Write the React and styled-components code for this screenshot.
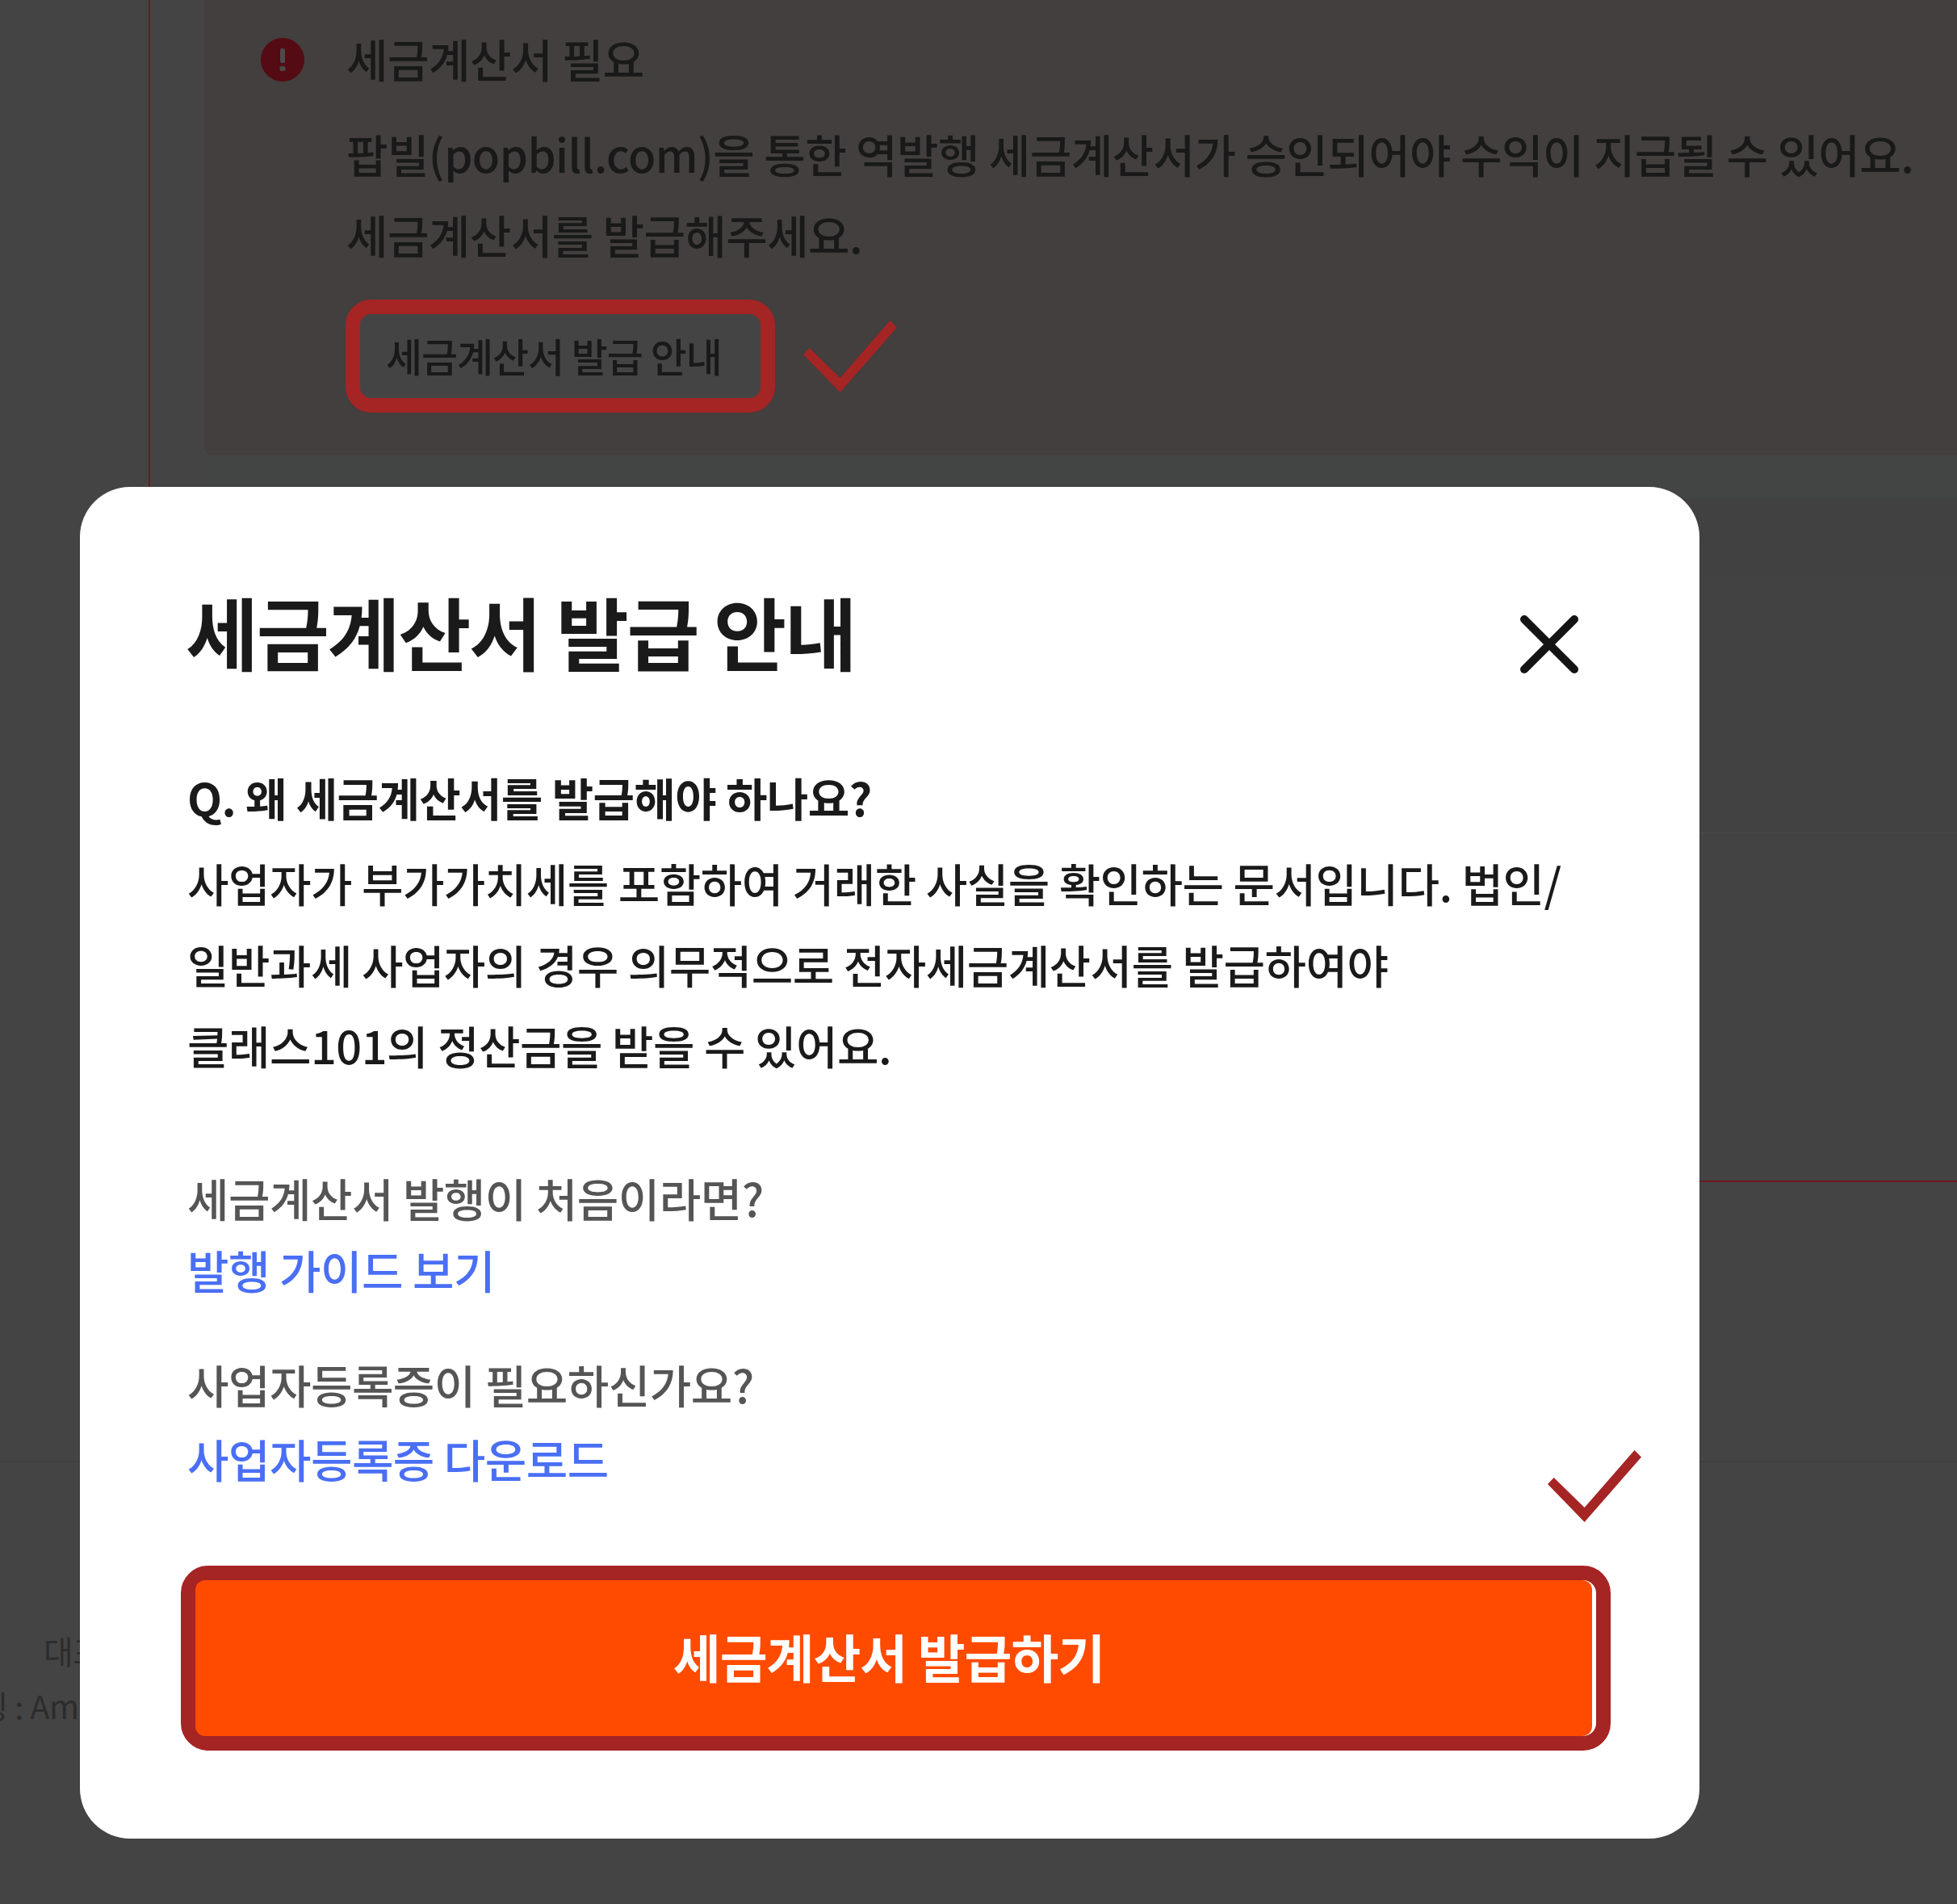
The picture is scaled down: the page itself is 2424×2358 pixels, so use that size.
import React from "react";
import styled, { createGlobalStyle } from "styled-components";

const GlobalStyle = createGlobalStyle`
  html, body { margin: 0; padding: 0; background: #444; }
  body { font-family: "Noto Sans CJK KR", "Noto Sans", sans-serif; }
  * { box-sizing: border-box; }
`;

const Page = styled.div`
  position: relative;
  width: 2424px;
  height: 2358px;
  overflow: hidden;
  background: #444;
  letter-spacing: -0.55px;
`;

/* dimmed page behind the modal */
const MarkedArea = styled.div`
  margin-left: 184px;
  height: 1464px;
  padding-left: 65px;
  border-left: 2px solid #6b1a1e;
  border-bottom: 2px solid #6b1a1e;
`;

const Card = styled.div`
  height: 565px;
  padding: 40px 0 0 71px;
  display: grid;
  grid-template-columns: 105px 1fr;
  align-content: start;
  background: #423f3e;
  border: 1px solid #494645;
  border-top: 0;
  border-right: 0;
  border-radius: 0 0 0 12px;
  color: #191919;
`;

const AlertIcon = styled.svg`
  display: block;
  margin-top: 7px;
`;

const CardBody = styled.div`
  display: flex;
  flex-direction: column;
  align-items: flex-start;
`;

const CardTitle = styled.div`
  margin-left: 1px;
  font-size: 56px;
  font-weight: 500;
  line-height: 64px;
`;

const CardText = styled.div`
  margin: 36px 0 0 1px;
  font-size: 56px;
  font-weight: 500;
  line-height: 100px;
  letter-spacing: -0.6px;
  white-space: nowrap;
`;

const GuideRow = styled.div`
  display: flex;
  align-items: center;
  gap: 35px;
  margin: 31px 0 0 0;
`;

const GuideButton = styled.div`
  width: 532px;
  height: 140px;
  padding: 0 0 4px 32px;
  display: flex;
  align-items: center;
  border: 18px solid #a52424;
  border-radius: 32px;
  background: #444;
  font-size: 49px;
  font-weight: 500;
  letter-spacing: -1.1px;
  line-height: 1;
  white-space: nowrap;
`;

const Tick = styled.svg`
  display: block;
  flex: none;
`;

const Strip = styled.div`
  height: ${(p) => p.$h}px;
  background: ${(p) => p.$bg};
  border-top: ${(p) => (p.$line ? `1px solid ${p.$line}` : "0")};
`;

const Footer = styled.div`
  margin-top: 345px;
  height: 548px;
  padding-top: 199px;
  border-top: 2px solid #3f3f3f;
  color: #2c2c2c;
  font-size: 40px;
  line-height: 68px;
`;

const FooterLine = styled.div`
  margin-left: ${(p) => p.$left}px;
  white-space: nowrap;
`;

/* modal */
const Modal = styled.div`
  position: absolute;
  left: 99px;
  top: 603px;
  width: 2006px;
  height: 1674px;
  padding: 110px 0 0 133px;
  background: #fff;
  border-radius: 62px;
  color: #1a1a1a;
`;

const ModalHead = styled.div`
  display: flex;
  justify-content: space-between;
  align-items: center;
  height: 130px;
  padding-right: 150px;
`;

const ModalTitle = styled.h2`
  margin: 4px 0 0 -2px;
  font-size: 98px;
  font-weight: 700;
  line-height: 130px;
  letter-spacing: -2.4px;
  white-space: nowrap;
`;

const CloseIcon = styled.svg`
  display: block;
  margin-top: 40px;
`;

const Question = styled.div`
  margin-top: 94px;
  font-size: 56px;
  font-weight: 700;
  line-height: 100px;
  letter-spacing: -0.7px;
  white-space: nowrap;
`;

const Answer = styled.div`
  margin-top: 6px;
  font-size: 56px;
  font-weight: 500;
  line-height: 100.5px;
  letter-spacing: -0.55px;
  white-space: nowrap;
`;

const HelpBlock = styled.div`
  margin-top: ${(p) => p.$top}px;
`;

const HelpLabel = styled.div`
  font-size: 56px;
  font-weight: 500;
  line-height: 80px;
  color: #555;
  white-space: nowrap;
`;

const HelpLink = styled.a`
  display: block;
  margin-top: ${(p) => p.$top}px;
  font-size: 56px;
  font-weight: 500;
  line-height: 80px;
  color: #4a6ff5;
  white-space: nowrap;
`;

const ModalTick = styled(Tick)`
  position: absolute;
  left: 1818px;
  top: 1193px;
`;

const ActionOutline = styled.div`
  width: 1771px;
  height: 229px;
  margin: 93px 0 0 -8px;
  padding-right: 5px;
  background: #fff;
  border: 18px solid #a52424;
  border-radius: 34px;
`;

const ActionButton = styled.button`
  display: block;
  width: 100%;
  height: 100%;
  padding: 0 12px 6px 0;
  border: 0;
  border-radius: 12px;
  background: #ff4b00;
  color: #fff;
  font-family: inherit;
  font-size: 64px;
  font-weight: 700;
  letter-spacing: -1px;
`;

function CheckMark({ as: Wrap = Tick }) {
  return (
    <Wrap width="116" height="89" viewBox="0 0 116 89">
      <path d="M7.7 34 L0 42 L45.6 89 L116 8.4 L107.5 0 L45.6 71 Z" fill="#a52424" />
    </Wrap>
  );
}

export default function App() {
  return (
    <>
      <GlobalStyle />
      <Page>
        <MarkedArea>
          <Card>
            <AlertIcon width="54" height="54" viewBox="0 0 54 54">
              <circle cx="27" cy="27" r="27" fill="#540b13" />
              <rect x="24" y="13" width="6" height="18" rx="2" fill="#4c4a4a" />
              <rect x="23.5" y="35" width="7" height="6" rx="2" fill="#4c4a4a" />
            </AlertIcon>
            <CardBody>
              <CardTitle>세금계산서 필요</CardTitle>
              <CardText>
                팝빌(popbill.com)을 통한 역발행 세금계산서가 승인되어야 수익이 지급될 수 있어요.
                <br />
                세금계산서를 발급해주세요.
              </CardText>
              <GuideRow>
                <GuideButton>세금계산서 발급 안내</GuideButton>
                <CheckMark />
              </GuideRow>
            </CardBody>
          </Card>
          <Strip $h={52} $bg="#434444" />
          <Strip $h={98} $bg="#414141" />
          <Strip $h={316} $bg="#424242" />
          <Strip $h={430} $bg="#434343" $line="#4a4a4a" />
        </MarkedArea>
        <Footer>
          <FooterLine $left={54}>대표이사</FooterLine>
          <FooterLine $left={-99}>호스팅 : Amazon</FooterLine>
        </Footer>

        <Modal>
          <ModalHead>
            <ModalTitle>세금계산서 발급 안내</ModalTitle>
            <CloseIcon width="72" height="72" viewBox="0 0 72 72">
              <path d="M5 5 L67 67 M67 5 L5 67" stroke="#141414" strokeWidth="10" strokeLinecap="round" />
            </CloseIcon>
          </ModalHead>
          <Question>Q. 왜 세금계산서를 발급해야 하나요?</Question>
          <Answer>
            사업자가 부가가치세를 포함하여 거래한 사실을 확인하는 문서입니다. 법인/
            <br />
            일반과세 사업자의 경우 의무적으로 전자세금계산서를 발급하여야
            <br />
            클래스101의 정산금을 받을 수 있어요.
          </Answer>
          <HelpBlock $top={98}>
            <HelpLabel>세금계산서 발행이 처음이라면?</HelpLabel>
            <HelpLink $top={9}>발행 가이드 보기</HelpLink>
          </HelpBlock>
          <HelpBlock $top={62}>
            <HelpLabel>사업자등록증이 필요하신가요?</HelpLabel>
            <HelpLink $top={12}>사업자등록증 다운로드</HelpLink>
          </HelpBlock>
          <CheckMark as={ModalTick} />
          <ActionOutline>
            <ActionButton>세금계산서 발급하기</ActionButton>
          </ActionOutline>
        </Modal>
      </Page>
    </>
  );
}
